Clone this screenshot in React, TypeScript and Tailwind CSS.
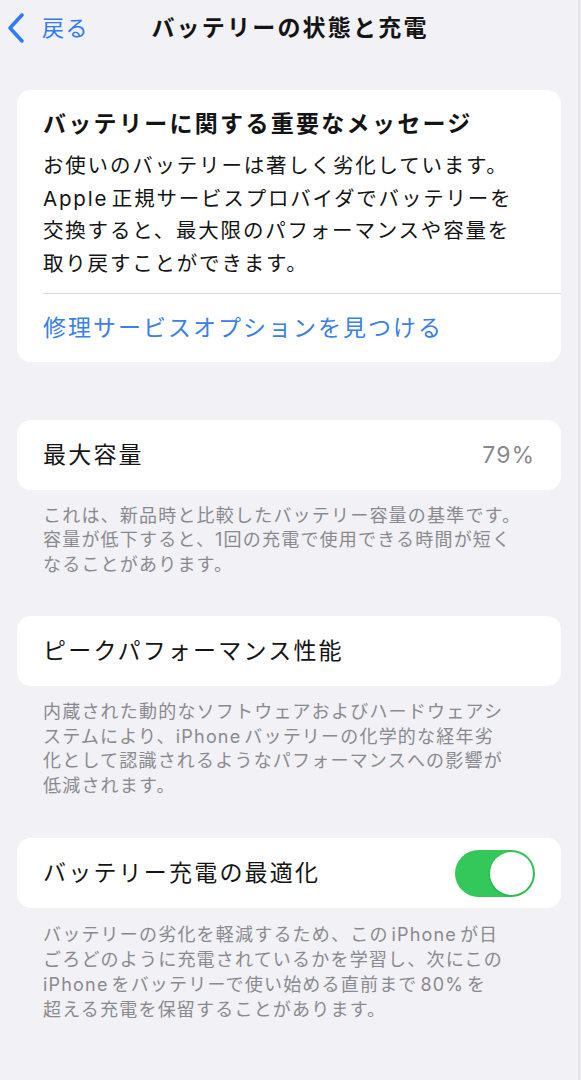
import React from "react";

const font = { fontFamily: '"Inter", "Noto Sans CJK JP", sans-serif' };

function Footer({ lines, lh = "leading-[24.5px]" }: { lines: React.ReactNode[]; lh?: string }) {
  return (
    <div className={`px-[43px] pt-[14px] text-[18px] ${lh} tracking-[1.2px] text-[#8a8a8e] whitespace-nowrap`}>
      {lines.map((l, i) => (
        <div key={i}>{l}</div>
      ))}
    </div>
  );
}

function Row({ children }: { children: React.ReactNode }) {
  return (
    <div className="mx-[17px] h-[70px] rounded-[14px] bg-white px-[26px] flex items-center justify-between">
      {children}
    </div>
  );
}

export default function App() {
  return (
    <div
      className="w-[581px] h-[1080px] bg-[#f1f1f6] border-r-[3px] border-[#e4e4e9] text-[#141414] overflow-hidden"
      style={font}
    >
      {/* nav */}
      <div className="relative h-[56px] flex items-center">
        <div className="absolute left-[6px] top-[12px] flex items-center">
          <svg width="20" height="32" viewBox="0 0 20 32">
            <path
              d="M16 3 L4 16 L16 29"
              fill="none"
              stroke="#2f7bf5"
              strokeWidth="3.6"
              strokeLinecap="round"
              strokeLinejoin="round"
            />
          </svg>
          <span className="ml-[16px] text-[22px] leading-[32px] tracking-[1.5px] text-[#2f7bf5]">戻る</span>
        </div>
        <div className="w-full text-center text-[23px] leading-[30px] font-bold tracking-[2.2px] pl-[2px]">
          バッテリーの状態と充電
        </div>
      </div>

      {/* card 1 */}
      <div className="mt-[34px] mx-[17px] rounded-[14px] bg-white">
        <div className="px-[26px] pt-[19px]">
          <div className="text-[23px] leading-[30px] font-bold tracking-[2.3px] whitespace-nowrap">
            バッテリーに関する重要なメッセージ
          </div>
          <div className="mt-[11px] text-[20.5px] leading-[32.7px] tracking-[1.8px] whitespace-nowrap">
            <div>お使いのバッテリーは著しく劣化しています。</div>
            <div>Apple{"\u200A"}正規サービスプロバイダでバッテリーを</div>
            <div>交換すると、最大限のパフォーマンスや容量を</div>
            <div>取り戻すことができます。</div>
          </div>
        </div>
        <div className="ml-[26px] mt-[12px] h-px bg-[#dcdce0]" />
        <div className="h-[68px] px-[26px] flex items-center text-[23px] tracking-[2px] text-[#3a80e6] whitespace-nowrap">
          修理サービスオプションを見つける
        </div>
      </div>

      {/* card 2 */}
      <div className="mt-[58px]">
        <Row>
          <span className="text-[23px] tracking-[2.2px]">最大容量</span>
          <span className="text-[23px] text-[#8a8a8e] tracking-[1px]">79%</span>
        </Row>
      </div>
      <Footer
        lines={[
          "これは、新品時と比較したバッテリー容量の基準です。",
          "容量が低下すると、1回の充電で使用できる時間が短く",
          "なることがあります。",
        ]}
      />

      {/* card 3 */}
      <div className="mt-[39px]">
        <Row>
          <span className="text-[23px] tracking-[2.2px] whitespace-nowrap">ピークパフォーマンス性能</span>
        </Row>
      </div>
      <Footer
        lines={[
          "内蔵された動的なソフトウェアおよびハードウェアシ",
          "ステムにより、iPhone\u200Aバッテリーの化学的な経年劣",
          "化として認識されるようなパフォーマンスへの影響が",
          "低減されます。",
        ]}
      />

      {/* card 4 */}
      <div className="mt-[40px]">
        <Row>
          <span className="text-[23px] tracking-[2.2px] whitespace-nowrap">バッテリー充電の最適化</span>
          <div className="w-[80px] h-[47px] rounded-full bg-[#34c759] flex items-center justify-end pr-[2px]">
            <div className="w-[43px] h-[43px] rounded-full bg-white shadow-[0_1px_3px_rgba(0,0,0,0.15)]" />
          </div>
        </Row>
      </div>
      <Footer
        lh="leading-[25px]"
        lines={[
          "バッテリーの劣化を軽減するため、この\u200AiPhone\u200Aが日",
          "ごろどのように充電されているかを学習し、次にこの",
          "iPhone\u200Aをバッテリーで使い始める直前まで\u200A80%\u200Aを",
          "超える充電を保留することがあります。",
        ]}
      />
    </div>
  );
}
